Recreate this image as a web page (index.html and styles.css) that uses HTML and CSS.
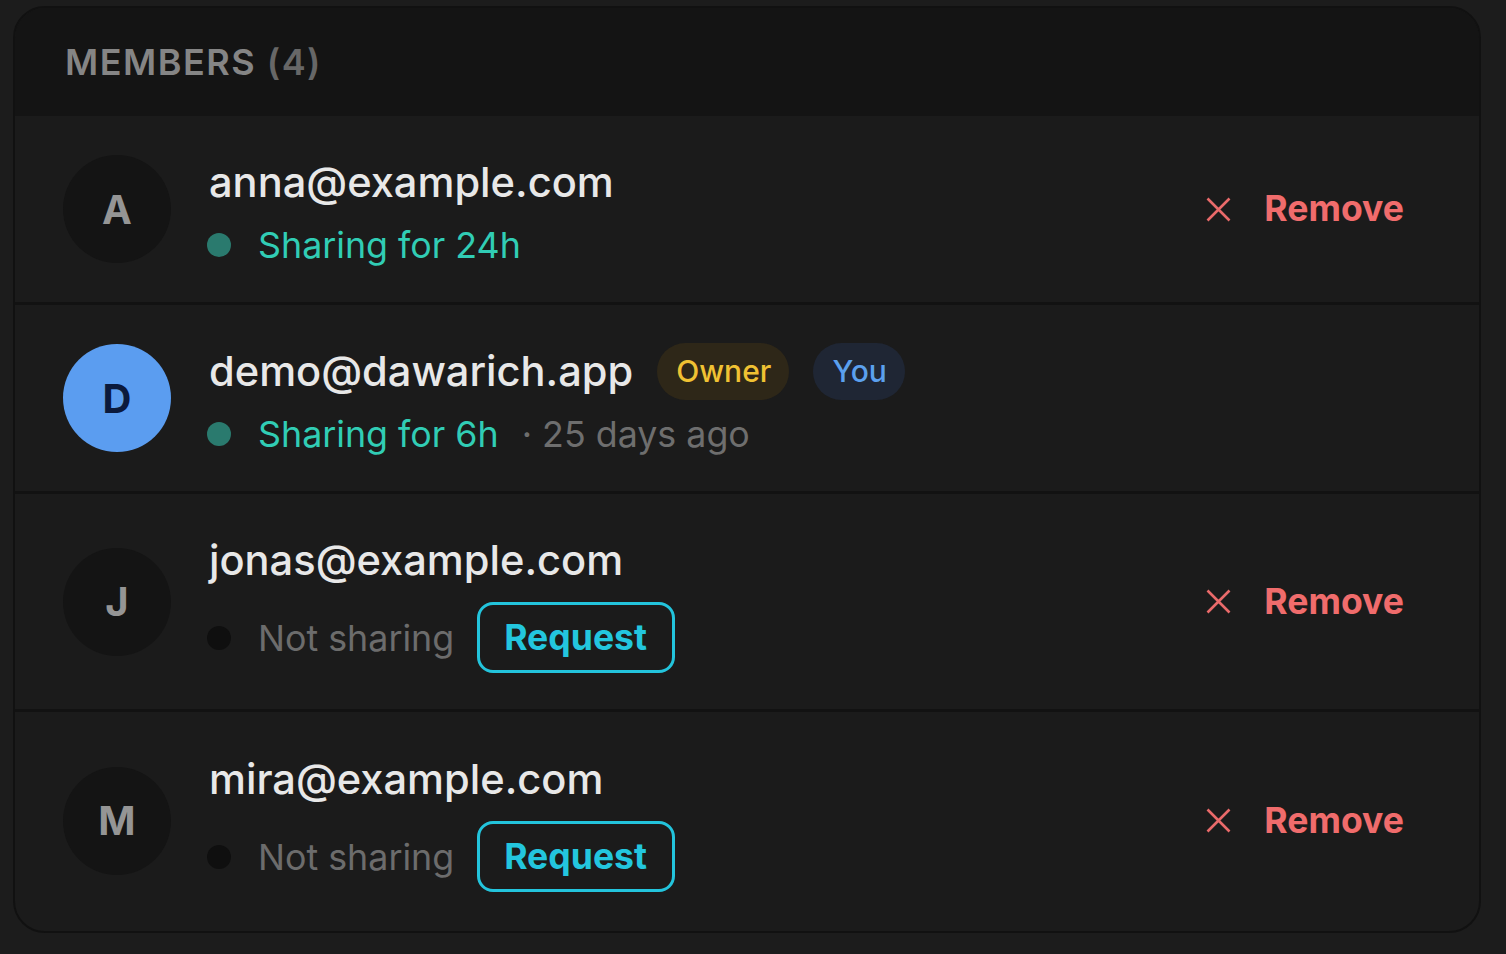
FILE: index.html
```html
<!DOCTYPE html>
<html lang="en">
<head>
<meta charset="utf-8">
<title>Members</title>
<link rel="stylesheet" href="styles.css">
</head>
<body>
<section class="card">
  <header class="card-head">MEMBERS <span class="count">(4)</span></header>
  <ul class="list">
    <li class="row">
      <div class="avatar">A</div>
      <div class="info">
        <div class="line1"><span class="email">anna@example.com</span></div>
        <div class="line2"><span class="dot on"></span><span class="status on">Sharing for 24h</span></div>
      </div>
      <button class="remove"><svg class="x" viewBox="0 0 25 25"><path d="M1.5 1.5 23.5 23.5M23.5 1.5 1.5 23.5"/></svg><span>Remove</span></button>
    </li>
    <li class="row">
      <div class="avatar me">D</div>
      <div class="info">
        <div class="line1"><span class="email">demo@dawarich.app</span><span class="badge owner">Owner</span><span class="badge you">You</span></div>
        <div class="line2"><span class="dot on"></span><span class="status on">Sharing for 6h</span><span class="ago">· 25 days ago</span></div>
      </div>
    </li>
    <li class="row">
      <div class="avatar">J</div>
      <div class="info">
        <div class="line1"><span class="email">jonas@example.com</span></div>
        <div class="line2"><span class="dot"></span><span class="status">Not sharing</span><button class="request">Request</button></div>
      </div>
      <button class="remove"><svg class="x" viewBox="0 0 25 25"><path d="M1.5 1.5 23.5 23.5M23.5 1.5 1.5 23.5"/></svg><span>Remove</span></button>
    </li>
    <li class="row">
      <div class="avatar">M</div>
      <div class="info">
        <div class="line1"><span class="email">mira@example.com</span></div>
        <div class="line2"><span class="dot"></span><span class="status">Not sharing</span><button class="request">Request</button></div>
      </div>
      <button class="remove"><svg class="x" viewBox="0 0 25 25"><path d="M1.5 1.5 23.5 23.5M23.5 1.5 1.5 23.5"/></svg><span>Remove</span></button>
    </li>
  </ul>
</section>
</body>
</html>
```

FILE: styles.css
```css
* { box-sizing: border-box; }
html, body { margin: 0; background: #1c1c1c; }
body {
  font-family: Inter, "Noto Sans", "Liberation Sans", sans-serif;
  padding: 6px 25px 22px 13px;
}
.card {
  border: 2px solid #111111;
  border-radius: 32px;
  overflow: hidden;
  background: #1b1b1b;
}
.card-head {
  background: #141414;
  padding: 27px 50px;
  font-size: 36px;
  line-height: 54px;
  font-weight: 600;
  letter-spacing: 1.5px;
  color: #858585;
}
.count { color: #676767; }
.list { list-style: none; margin: 0; padding: 0; }
.row {
  display: flex;
  align-items: center;
  padding: 36px 75px 36px 48px;
  border-top: 3px solid #121212;
}
.row:first-child { border-top: 0; }
.row:last-child { padding-top: 37px; padding-bottom: 39px; }
.avatar {
  width: 108px; height: 108px;
  flex: none;
  border-radius: 50%;
  background: #141414;
  color: #959595;
  display: flex; align-items: center; justify-content: center;
  font-size: 40px; font-weight: 700;
}
.avatar.me { background: #5b9df0; color: #0b1a3c; }
.info { flex: 1; margin-left: 38px; display: flex; flex-direction: column; gap: 12px; }
.line1 { display: flex; align-items: center; height: 60px; }
.email { font-size: 41.6px; font-weight: 500; color: #e8e8e8; line-height: 60px; }
.badge {
  margin-left: 24px;
  border-radius: 999px;
  font-size: 30px; font-weight: 500;
  line-height: 41px;
  padding: 8px 18px 8px 19px;
}
.owner { background: #2e2718; color: #f0c133; }
.you { background: #1f2634; color: #5ba0ee; }
.line2 { display: flex; align-items: center; min-height: 42px; }
.dot { width: 24px; height: 24px; border-radius: 50%; background: #0f0f0f; margin-left: -2px; }
.dot.on { background: #2a7a6e; }
.status { margin-left: 27px; font-size: 35.8px; line-height: 42px; color: #6c6c6c; }
.status.on { color: #31cdb5; }
.ago { margin-left: 23px; font-size: 35.8px; line-height: 42px; color: #6e6e6e; }
.request {
  margin-left: 23px;
  font-family: inherit;
  background: transparent;
  border: 3px solid #23c4dc;
  border-radius: 16px;
  color: #23c6de;
  font-size: 35.6px; font-weight: 700;
  line-height: 49px;
  padding: 8px 25px 8px 24px;
  height: 71px;
}
.remove {
  display: flex; align-items: center;
  background: transparent; border: 0; padding: 0;
  font-family: inherit;
  color: #f06c6c;
  font-size: 35.6px; font-weight: 700; line-height: 48px;
}
.x { width: 25px; height: 25px; margin-right: 33px; }
.x path { stroke: #e96a6a; stroke-width: 2.6; fill: none; }
```
